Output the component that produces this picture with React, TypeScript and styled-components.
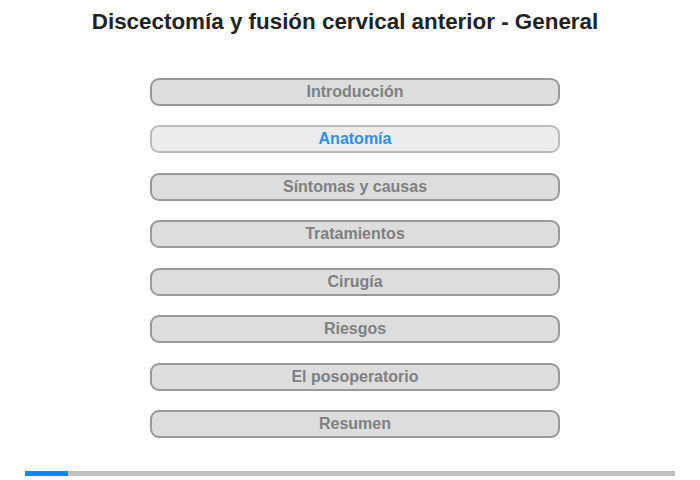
import React from "react";
import styled, { createGlobalStyle } from "styled-components";

const Global = createGlobalStyle`
  html, body { margin: 0; padding: 0; background: #fff; }
  body { font-family: "Liberation Sans", Arial, sans-serif; }
`;

const Page = styled.div`
  width: 700px;
  height: 480px;
  display: flex;
  flex-direction: column;
  box-sizing: border-box;
`;

const Title = styled.h1`
  margin: 0 10px 0 0;
  padding: 9px 0 0 0;
  height: 78px;
  box-sizing: border-box;
  text-align: center;
  font-size: 22.4px;
  font-weight: bold;
  color: #222;
  line-height: 25px;
`;

const Menu = styled.div`
  display: flex;
  flex-direction: column;
  align-items: center;
  gap: 19.45px;
  padding-left: 10px;
`;

const Item = styled.div<{ $active?: boolean }>`
  width: 410px;
  height: 28px;
  box-sizing: border-box;
  border: 2px solid ${(p) => (p.$active ? "#bbb" : "#999")};
  background: ${(p) => (p.$active ? "#ececec" : "#dddddd")};
  border-radius: 9px;
  display: flex;
  align-items: center;
  justify-content: center;
  font-size: 16px;
  font-weight: bold;
  color: ${(p) => (p.$active ? "#2b8ff6" : "#808080")};
`;

const Progress = styled.div`
  margin: 33px 25px 0 25px;
  height: 5px;
  background: #c0c0c0;
  display: flex;
`;

const Fill = styled.div`
  height: 100%;
  background: #0088ff;
`;

const items = [
  "Introducción",
  "Anatomía",
  "Síntomas y causas",
  "Tratamientos",
  "Cirugía",
  "Riesgos",
  "El posoperatorio",
  "Resumen",
];

export default function App() {
  return (
    <Page>
      <Global />
      <Title>Discectomía y fusión cervical anterior - General</Title>
      <Menu>
        {items.map((t, i) => (
          <Item key={t} $active={i === 1}>
            {t}
          </Item>
        ))}
      </Menu>
      <Progress>
        <Fill style={{ width: `${(43 / 650) * 100}%` }} />
      </Progress>
    </Page>
  );
}
